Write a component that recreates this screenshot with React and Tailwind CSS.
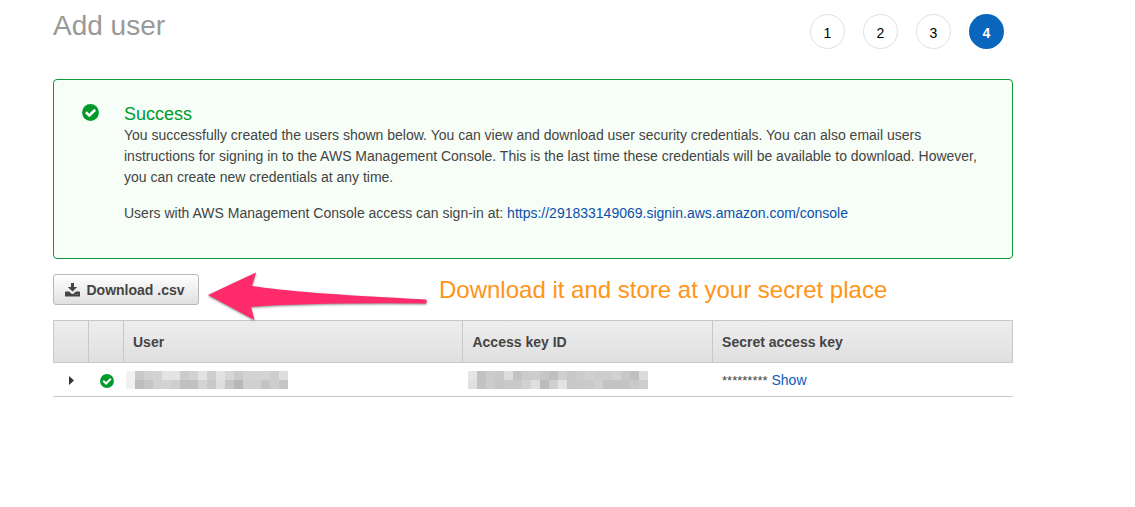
import React from 'react';

const steps = [1, 2, 3, 4];

const userMosaic = [
  ['#f2f2f2', '#c9c9c9', '#d0d1d1', '#d3d3d3', '#e3e3e3', '#e3e3e3', '#cbcbcb', '#d2d2d2', '#e2e2e2', '#cbcfce', '#e2e2e2', '#d6d6d6', '#cbcbcb', '#d3d3d3', '#d6d3d4', '#d3d3d3', '#cdcdcd', '#dedede'],
  ['#f1f1f1', '#bdbdbd', '#c5c5c5', '#d1d1d1', '#d3d3d3', '#cecece', '#c0c0c0', '#c1c1c1', '#d5d2d3', '#c9c9c9', '#dedede', '#c6c6c6', '#b8b8b8', '#d0d0ce', '#cfcfcd', '#c4c4c5', '#cecece', '#c6c6c6'],
];

const keyMosaic = [
  ['#e6e6e6', '#c3c1c3', '#cccccc', '#c9c9c9', '#dfdbde', '#c3c3c3', '#cbcbcb', '#cccdcd', '#c5c7c7', '#bfc0c0', '#cfcfcf', '#c7c7c7', '#cbcbcb', '#cfd0d0', '#cbcecd', '#cbcecd', '#d0d2d2', '#c8c8c8', '#c1bfc1', '#d9dcdb'],
  ['#e0e0dd', '#c3c3c4', '#cccccc', '#c4c5c5', '#c8caca', '#c8caca', '#d0d1d1', '#dde0df', '#bcbcbd', '#cfcfcf', '#e2e3e3', '#c7c9c8', '#c8c9c9', '#c9caca', '#cfcfcf', '#c2c3c3', '#c3c3c3', '#c4c4c4', '#c8c9c9', '#cdcfce'],
];

function Mosaic({ rows, label }) {
  return (
    <div role="img" aria-label={label} className="flex flex-col">
      {rows.map((row, r) => (
        <div key={r} className="flex">
          {row.map((color, i) => (
            <span key={i} className="h-[9px] w-[9px] shrink-0" style={{ backgroundColor: color }} />
          ))}
        </div>
      ))}
    </div>
  );
}

function CheckCircle({ className }) {
  return (
    <svg viewBox="0 0 17 17" className={className} aria-hidden="true">
      <circle cx="8.5" cy="8.5" r="8.4" fill="#009a2c" />
      <path d="M3.9 8.3 7.3 11.5 13.2 5.8" fill="none" stroke="#fff" strokeWidth="2.6" />
    </svg>
  );
}

function DownloadIcon() {
  return (
    <svg viewBox="0 0 15 14" className="h-[14px] w-[15px]" aria-hidden="true">
      <path fill="#444" d="M6 0h3v4h3.200L7.500 8.600 2.800 4H6z" />
      <path fill="#444" fillRule="evenodd" d="M.6 8.600h3.600l2 1.800q1.300 1 2.600 0l2-1.800h3.600q.6 0 .6.6v3.800q0 .6-.6.6H.6q-.6 0-.6-.6v-3.800q0-.6.6-.6zM10.300 11.400v.7h.7v-.7zM12.400 11.400v.7h.7v-.7z" />
    </svg>
  );
}

function Arrow() {
  return (
    <svg viewBox="0 0 228 60" className="pointer-events-none absolute left-[147px] -top-[9px] h-[60px] w-[228px] overflow-visible drop-shadow-[0_1px_1px_rgba(0,0,0,0.45)]" aria-hidden="true">
      <path fill="#ff2b6b" d="M8 30 56 7.500 52 21Q95 28 226 34.500Q227.500 36.500 226 38.500Q110 37.500 51 42L54.500 55z" />
    </svg>
  );
}

export default function App() {
  return (
    <main className="min-h-screen bg-white pt-[10px] pr-[122px] pl-[53px] font-['Liberation_Sans',Arial,sans-serif] text-sm text-[#444]">
      <header className="flex items-start justify-between pr-[9px]">
        <h1 className="text-[28px] leading-[32px] text-[#999]">Add user</h1>
        <ol className="flex gap-[18px] pt-1">
          {steps.map((n) => (
            <li
              key={n}
              aria-current={n === 4 ? 'step' : undefined}
              className={
                n === 4
                  ? 'flex size-[35px] items-center justify-center rounded-full bg-[#0a66bd] pt-[2px] font-bold text-white'
                  : 'flex size-[35px] items-center justify-center rounded-full border border-[#e0e0e0] pt-[2px] text-black'
              }
            >
              {n}
            </li>
          ))}
        </ol>
      </header>

      <section className="mt-[30px] flex rounded-[4px] border border-[#0f9a3a] bg-[#f6fef7] pt-6 pr-6 pb-[34px] pl-7">
        <CheckCircle className="h-[17px] w-[17px] shrink-0" />
        <div className="ml-[25px] leading-[21px]">
          <h2 className="text-lg leading-[21px] text-[#009a2c]">Success</h2>
          <p>
            You successfully created the users shown below. You can view and download user security credentials. You can also email users instructions for signing in to the AWS Management Console. This is the last time these credentials will be available to download. However, you can create new credentials at any time.
          </p>
          <p className="mt-[15px]">
            Users with AWS Management Console access can sign-in at:{' '}
            <a href="https://291833149069.signin.aws.amazon.com/console" className="text-[#0c4fad]">
              https://291833149069.signin.aws.amazon.com/console
            </a>
          </p>
        </div>
      </section>

      <div className="relative mt-[15px] flex items-center">
        <button type="button" className="flex h-[31px] w-[146px] items-center justify-center gap-[6px] rounded-[3px] border border-[#b8b8b8] bg-linear-to-b from-white to-[#e0e0e0] pr-[2px] font-bold">
          <DownloadIcon />
          Download .csv
        </button>
        <Arrow />
        <p className="ml-[240px] text-2xl leading-[31px] whitespace-nowrap text-[#ff9417]">
          Download it and store at your secret place
        </p>
      </div>

      <table className="mt-[15px] w-full table-fixed border-separate border-spacing-0 text-left">
        <colgroup>
          <col className="w-[35px]" />
          <col className="w-[35px]" />
          <col />
          <col className="w-[26%]" />
          <col className="w-[31.35%]" />
        </colgroup>
        <thead>
          <tr className="h-[43px] bg-linear-to-b from-[#eee] to-[#dfdfdf]">
            <th className="border-y border-l border-[#c8c8c8]" aria-label="Expand" />
            <th className="border-y border-l border-[#c8c8c8]" aria-label="Status" />
            <th className="border-y border-l border-[#c8c8c8] px-[9px]">User</th>
            <th className="border-y border-l border-[#c8c8c8] px-[9px]">Access key ID</th>
            <th className="border border-[#c8c8c8] px-[9px]">Secret access key</th>
          </tr>
        </thead>
        <tbody>
          <tr className="h-[34px] [&>td]:border-b [&>td]:border-[#c8c8c8]">
            <td className="pt-[2px]">
              <button type="button" aria-label="Expand row" className="ml-4 flex">
                <svg viewBox="0 0 5 9" className="h-[9px] w-[5px]" aria-hidden="true">
                  <path d="M0 0 5 4.500 0 9z" fill="#333" />
                </svg>
              </button>
            </td>
            <td className="pt-[2px]">
              <CheckCircle className="ml-3 h-[14px] w-[14px]" />
            </td>
            <td className="pl-[3px]">
              <Mosaic rows={userMosaic} label="Hidden user name" />
            </td>
            <td className="pl-[6px]">
              <Mosaic rows={keyMosaic} label="Hidden access key ID" />
            </td>
            <td className="px-[10px] pt-[2px]">
              <span className="text-[13px]">*********</span>{' '}
              <a href="#show" className="text-[#0f5bb8]">Show</a>
            </td>
          </tr>
        </tbody>
      </table>
    </main>
  );
}
